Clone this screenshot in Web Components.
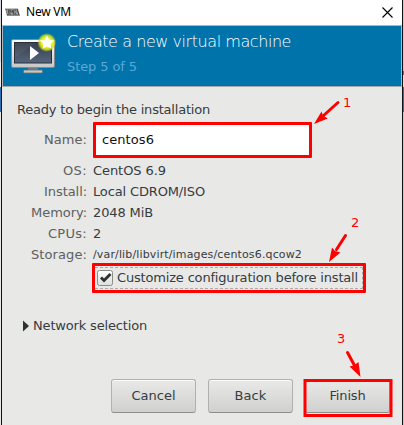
<!DOCTYPE html>
<html lang="en"><head><meta charset="utf-8"><title>New VM</title>
<style>html,body{margin:0;width:404px;height:425px;overflow:hidden;background:#e8e8e7}</style></head>
<body><vm-window></vm-window>
<script>
const define = (name, html, ready) => customElements.define(name, class extends HTMLElement {
  connectedCallback() {
    if (this.shadowRoot) return;
    this.attachShadow({mode:'open'}).innerHTML = html;
    if (ready) ready(this, this.shadowRoot);
  }
});
// A line of text; "w" is its advance width, reached by letter spacing.
define('vm-text', `<style>:host{display:block;white-space:nowrap;width:max-content;line-height:21px}span{display:inline-block}</style><span><slot></slot></span>`, (el, root) => {
  const w = +el.getAttribute('w');
  if (!w) return;
  const s = root.querySelector('span');
  const n = el.textContent.length;
  s.style.letterSpacing = ((w - s.getBoundingClientRect().width) / n) + 'px';
});
define('vm-logo', `<style>:host{display:block;width:16px;height:9px}svg{display:block}</style>
<svg width="16" height="9" viewBox="0 0 16 9"><path d="M0 .5h13l2 7.500H2z" fill="#8a8a8a"/><path d="M1 1l2 6 1-6M5 7V2l2 3 1-3 1 5M10 1l1 6M12 1l2 6" fill="none" stroke="#454545" stroke-width=".9"/><path d="M1.500 2l1.500 4M5.500 5h2M10 3l2 3" stroke="#ccc" stroke-width=".7"/></svg>`);
define('vm-monitor', `<style>:host{display:block;width:48px;height:44px}svg{display:block}</style>
<svg width="48" height="44" viewBox="8 32 48 44"><defs><linearGradient id="s" x2="0" y2="1"><stop stop-color="#363e4b"/><stop offset="1" stop-color="#56657d"/></linearGradient><linearGradient id="f" x2="0" y2="1"><stop stop-color="#fff"/><stop offset="1" stop-color="#c5c6c5"/></linearGradient><radialGradient id="g"><stop offset=".5" stop-color="#f5f82b"/><stop offset=".78" stop-color="#d5e512" stop-opacity=".8"/><stop offset="1" stop-color="#b0cf20" stop-opacity="0"/></radialGradient></defs>
<path d="M28 67h10v4h-10z" fill="#777b7d"/><rect x="23.500" y="70" width="19" height="3" rx="1" fill="#c7c9c8" stroke="#666e70" stroke-width=".8"/><rect x="11.500" y="39.500" width="43" height="28" rx="1.500" fill="url(#f)" stroke="#858b8d"/><rect x="14.500" y="42.500" width="37" height="20.500" fill="url(#s)" stroke="#292f39"/><path d="M15 43h20L15 58z" fill="#fff" opacity=".05"/><path d="M30 46v14l9-7z" fill="#fff"/><circle cx="46.800" cy="42.500" r="9.500" fill="url(#g)"/><path d="M47 35.500l2.200 4.400 5 .6-3.700 3.400 1 4.900-4.500-2.500-4.500 2.500 1-4.900-3.700-3.400 5-.6z" fill="#fff"/></svg>`);
define('vm-titlebar', `<style>:host{display:flex;height:25px;background:#fff;align-items:flex-start;box-sizing:border-box;padding:0 9px 0 3px}vm-logo{margin-top:8px}vm-text{font:12px "Noto Sans","Open Sans",sans-serif;line-height:24px;margin-left:5px;color:#000}svg{margin:7px 0 0 auto}</style>
<vm-logo></vm-logo><vm-text w="45">New VM</vm-text><svg width="11" height="11"><path d="M.5.5l10 10M10.500.5l-10 10" stroke="#000" stroke-width="1.150"/></svg>`);
define('vm-banner', `<style>:host{display:flex;height:62px;box-sizing:border-box;background:#0073aa;border:1px solid #b4b8b8;border-bottom-color:#a4a9a9;padding:6px 0 0 5px}.t{font-size:16px;font-weight:200;color:#fff;margin:-1px 0 0 11px}.s{font-size:13px;color:#5ca8d6;margin:4px 0 0 11px}</style>
<vm-monitor></vm-monitor><div><vm-text class="t" w="224">Create a new virtual machine</vm-text><vm-text class="s" w="70">Step 5 of 5</vm-text></div>`);
define('vm-row', `<style>:host{display:flex;height:21px;gap:6px;color:#363c3e}.l{width:85px;display:flex;justify-content:flex-end;color:#5c6060}</style><div class="l"><slot name="label"></slot></div><slot></slot>`);
define('vm-entry', `<style>:host{display:flex;width:219px;height:36px;box-sizing:border-box;border:3px solid #f00;border-radius:1px;background:#fff;color:#111;padding:4px 0 0 6px}</style><slot></slot>`);
define('vm-check', `<style>:host{display:block;width:274px;height:30px;box-sizing:border-box;border:3px solid #f00;border-radius:1px;padding:1px 0}.f{display:flex;height:22px;box-sizing:border-box;border:1px dashed #aaa;border-left:0;padding:2px 0 0 2px;gap:4px}svg{flex:none}::slotted(vm-text){margin-top:-3px}</style>
<div class="f"><svg width="16" height="16"><defs><linearGradient id="c" x2="0" y2="1"><stop stop-color="#fff"/><stop offset="1" stop-color="#ddd"/></linearGradient></defs><rect x=".5" y=".5" width="15" height="15" rx="2" fill="url(#c)" stroke="#8b8b88"/><path d="M4 7.500l3 3L13.500 4" fill="none" stroke="#2e3436" stroke-width="3"/></svg><slot></slot></div>`);
define('vm-button', `<style>:host{display:flex;justify-content:center;width:85px;height:34px;box-sizing:border-box;border:1px solid #b0b0ae;border-bottom-color:#8e8e8c;border-radius:3px;background:linear-gradient(#e9e9e8,#d0d0ce);box-shadow:inset 0 1px #fbfbfb;padding-top:5px;color:#363c3e}</style><slot></slot>`);
// Red arrows and step numbers lying over the dialog.
define('vm-notes', `<style>:host{position:absolute;inset:0;color:#f00;font:13px "DejaVu Sans",sans-serif}svg{position:absolute;left:0;top:0}vm-text{position:absolute}</style>
<svg width="404" height="425" fill="#f00"><g stroke="#f00" stroke-width="3" stroke-linecap="round"><path d="M338 102.500L323 116M345.500 235.500l-9 14M347.500 352.500l7 13"/></g><path d="M314 124L321.500 111.500 323 115.500 327.800 118.500zM329 262L332 247.500 335 251 340.500 252.500zM360.500 377L349.500 366.500 354 365.500 358.500 362z"/><rect x="305" y="380.500" width="86" height="35" fill="none" stroke="#f00" stroke-width="3"/></svg>
<vm-text style="left:343px;top:92px">1</vm-text><vm-text style="left:351px;top:212px">2</vm-text><vm-text style="left:337px;top:328px">3</vm-text>`);
define('vm-window', `<style>:host{display:grid;position:relative;grid-template-columns:1px 1px 1fr 1px 1px;width:404px;height:425px;font:13px "DejaVu Sans",sans-serif;line-height:21px;color:#363c3e}.e{background:linear-gradient(#d8dce0 0 62px,#eee 62px 87px,#2f70b3 87px 112px,#e8e8e7 112px)}.e.r{background:linear-gradient(#c8c8c8 0 71px,#666 71px 75px,#ddd 75px 87px,#2f70b3 87px 112px,#c8c8c8 112px)}.b{background:#111}.w{background:#e8e8e7;display:flex;flex-direction:column}main{padding:12px 0 0}.head{margin-left:15px}.name{height:36px;margin-top:2px}.name [slot=label]{margin-top:7px}vm-check{margin:-2px 0 0 90px}.small{font-size:11px}.net{display:flex;align-items:center;gap:4px;margin:22px 0 0 21px}.buttons{display:flex;gap:12px;margin:43px 0 0 109px}</style>
<div class="e"></div><div class="b"></div><div class="w"><vm-titlebar></vm-titlebar><vm-banner></vm-banner><main>
<vm-text class="head" w="193">Ready to begin the installation</vm-text>
<vm-row class="name"><vm-text slot="label" w="43">Name:</vm-text><vm-entry><vm-text w="52">centos6</vm-text></vm-entry></vm-row>
<div style="height:2px"></div>
<vm-row><vm-text slot="label" w="24">OS:</vm-text><vm-text w="73">CentOS 6.9</vm-text></vm-row>
<vm-row><vm-text slot="label" w="43">Install:</vm-text><vm-text w="112">Local CDROM/ISO</vm-text></vm-row>
<vm-row><vm-text slot="label" w="56">Memory:</vm-text><vm-text w="60">2048 MiB</vm-text></vm-row>
<vm-row><vm-text slot="label" w="39">CPUs:</vm-text><vm-text>2</vm-text></vm-row>
<vm-row><vm-text slot="label" w="56">Storage:</vm-text><vm-text class="small" w="209">/var/lib/libvirt/images/centos6.qcow2</vm-text></vm-row>
<vm-check><vm-text w="241">Customize configuration before install</vm-text></vm-check>
<div class="net"><svg width="6" height="12"><path d="M0 .5l6 5.500-6 5.500z" fill="#2e3436"/></svg><vm-text w="114">Network selection</vm-text></div>
<div class="buttons"><vm-button><vm-text w="44">Cancel</vm-text></vm-button><vm-button><vm-text w="32">Back</vm-text></vm-button><vm-button><vm-text w="36">Finish</vm-text></vm-button></div>
</main></div><div class="b"></div><div class="e r"></div><vm-notes></vm-notes>`);
</script></body></html>
